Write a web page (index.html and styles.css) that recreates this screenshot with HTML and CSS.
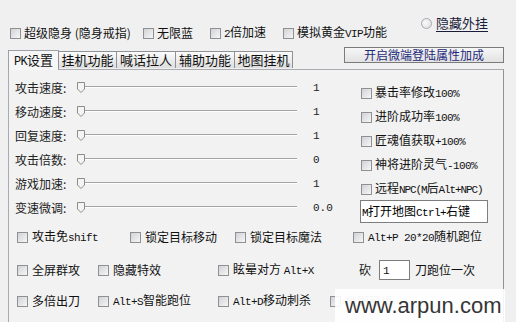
FILE: index.html
```html
<!DOCTYPE html>
<html lang="zh-CN">
<head>
  <meta charset="UTF-8">
  <title>PK设置</title>
  <link rel="stylesheet" href="styles.css">
</head>
<body>

<div class="top">
  <div class="opts">
    <label class="cb w1"><span class="box"></span><span>超级隐身 (隐身戒指)</span></label>
    <label class="cb w2"><span class="box"></span><span>无限蓝</span></label>
    <label class="cb w3"><span class="box"></span><span><span class="en">2</span>倍加速</span></label>
    <label class="cb"><span class="box"></span><span>模拟黄金<span class="en">VIP</span>功能</span></label>
  </div>
  <label class="radio"><span class="dot"></span><u>隐藏外挂</u></label>
</div>

<div class="tabbar">
  <div class="tab active" style="width:51px"><span><span class="en">PK</span>设置</span></div>
  <div class="tab" style="width:59px">挂机功能</div>
  <div class="tab" style="width:60px">喊话拉人</div>
  <div class="tab" style="width:60px">辅助功能</div>
  <div class="tab" style="width:59px">地图挂机</div>
  <button class="btn">开启微端登陆属性加成</button>
</div>

<div class="panel">
  <div class="upper">
    <div class="sliders">
      <div class="srow"><span class="slabel">攻击速度:</span><div class="slider"><div class="track"></div><svg class="thumb" width="8" height="11" viewBox="0 0 8 11"><path d="M0.5 0.5 H7.5 V7 L4 10.5 L0.5 7 Z" fill="#f4f4f4" stroke="#8c8c8c"/></svg></div><span class="val">1</span></div>
      <div class="srow"><span class="slabel">移动速度:</span><div class="slider"><div class="track"></div><svg class="thumb" width="8" height="11" viewBox="0 0 8 11"><path d="M0.5 0.5 H7.5 V7 L4 10.5 L0.5 7 Z" fill="#f4f4f4" stroke="#8c8c8c"/></svg></div><span class="val">1</span></div>
      <div class="srow"><span class="slabel">回复速度:</span><div class="slider"><div class="track"></div><svg class="thumb" width="8" height="11" viewBox="0 0 8 11"><path d="M0.5 0.5 H7.5 V7 L4 10.5 L0.5 7 Z" fill="#f4f4f4" stroke="#8c8c8c"/></svg></div><span class="val">1</span></div>
      <div class="srow"><span class="slabel">攻击倍数:</span><div class="slider"><div class="track"></div><svg class="thumb" width="8" height="11" viewBox="0 0 8 11"><path d="M0.5 0.5 H7.5 V7 L4 10.5 L0.5 7 Z" fill="#f4f4f4" stroke="#8c8c8c"/></svg></div><span class="val">0</span></div>
      <div class="srow"><span class="slabel">游戏加速:</span><div class="slider"><div class="track"></div><svg class="thumb" width="8" height="11" viewBox="0 0 8 11"><path d="M0.5 0.5 H7.5 V7 L4 10.5 L0.5 7 Z" fill="#f4f4f4" stroke="#8c8c8c"/></svg></div><span class="val">1</span></div>
      <div class="srow"><span class="slabel">变速微调:</span><div class="slider"><div class="track"></div><svg class="thumb" width="8" height="11" viewBox="0 0 8 11"><path d="M0.5 0.5 H7.5 V7 L4 10.5 L0.5 7 Z" fill="#f4f4f4" stroke="#8c8c8c"/></svg></div><span class="val">0.0</span></div>
    </div>
    <div class="rightcol">
      <label class="cb crow"><span class="box"></span><span>暴击率修改<span class="en">100%</span></span></label>
      <label class="cb crow"><span class="box"></span><span>进阶成功率<span class="en">100%</span></span></label>
      <label class="cb crow"><span class="box"></span><span>匠魂值获取<span class="en">+100%</span></span></label>
      <label class="cb crow"><span class="box"></span><span>神将进阶灵气<span class="en">-100%</span></span></label>
      <label class="cb crow"><span class="box"></span><span>远程<span class="en tight">NPC(M</span>后<span class="en tight">Alt+NPC)</span></span></label>
      <div class="textbox"><span><span class="en">M</span>打开地图<span class="en">Ctrl+</span>右键</span></div>
    </div>
  </div>

  <div class="row r1">
    <label class="cb" style="width:113px"><span class="box"></span><span>攻击免<span class="en">shift</span></span></label>
    <label class="cb" style="width:105px"><span class="box"></span><span>锁定目标移动</span></label>
    <label class="cb" style="width:118px"><span class="box"></span><span>锁定目标魔法</span></label>
    <label class="cb"><span class="box"></span><span><span class="en">Alt+P 20*20</span>随机跑位</span></label>
  </div>
  <div class="row r2">
    <label class="cb" style="width:81px"><span class="box"></span><span>全屏群攻</span></label>
    <label class="cb" style="width:120px"><span class="box"></span><span>隐藏特效</span></label>
    <label class="cb" style="width:141px"><span class="box"></span><span>眩晕对方 <span class="en">Alt+X</span></span></label>
    <span class="kan">砍</span><span class="numbox">1</span><span>刀跑位一次</span>
  </div>
  <div class="row r3">
    <label class="cb" style="width:81px"><span class="box"></span><span>多倍出刀</span></label>
    <label class="cb" style="width:120px"><span class="box"></span><span><span class="en">Alt+S</span>智能跑位</span></label>
    <label class="cb" style="width:112px"><span class="box"></span><span><span class="en">Alt+D</span>移动刺杀</span></label>
    <label class="cb"><span class="box"></span><span class="hidden">地图穿墙</span></label>
  </div>
</div>

<div class="watermark">www.arpun.com</div>

</body>
</html>
```

FILE: styles.css
```css
* {
  box-sizing: border-box;
}
body {
  margin: 0;
  width: 516px;
  height: 322px;
  overflow: hidden;
  background-color: #f0f0f0;
  color: #111;
  font-family: "Noto Sans CJK SC", sans-serif;
  font-size: 12px;
  line-height: 12px;
  position: relative;
}
.en {
  font-family: "Liberation Mono", monospace;
  font-size: 11px;
  letter-spacing: -0.6px;
}
.tight {
  letter-spacing: -1.1px;
}
.top {
  height: 44px;
  display: flex;
  justify-content: space-between;
}
.opts {
  display: flex;
  padding: 27px 0 0 10px;
}
.cb {
  display: flex;
  align-items: center;
  gap: 3px;
  height: 12px;
  white-space: nowrap;
}
.w1 { width: 133px; }
.w2 { width: 67px; }
.w3 { width: 73px; }
.box {
  width: 11px;
  height: 11px;
  flex: none;
  border: 1px solid #8e9094;
  background: linear-gradient(135deg, #d2d3d6, #f6f6f6);
}
.radio {
  display: flex;
  align-items: center;
  gap: 4px;
  margin: 17px 28px 0 0;
  height: 12px;
  font-size: 13px;
  color: #1b1b3a;
}
.dot {
  width: 11px;
  height: 11px;
  border-radius: 50%;
  border: 1px solid #a8aab0;
  background: radial-gradient(circle at 40% 40%, #fbfbfb, #d8d9dc);
}
.radio u {
  text-underline-offset: 3px;
}
.tabbar {
  height: 25px;
  display: flex;
  align-items: flex-end;
  padding-left: 8px;
  position: relative;
  z-index: 1;
}
.tab {
  height: 17px;
  border: 1px solid #8e9196;
  border-bottom: none;
  background: linear-gradient(#fbfbfb, #dedede);
  font-size: 13px;
  display: flex;
  align-items: center;
  justify-content: center;
  margin-bottom: 1px;
  margin-right: -1px;
}
.tab.active {
  height: 20px;
  margin-bottom: -1px;
  background: #f6f6f6;
  border-color: #9da0a6;
}
.tab .en {
  font-size: 12px;
}
.btn {
  align-self: flex-start;
  margin: 3px 12px 0 auto;
  width: 160px;
  height: 16px;
  padding: 0;
  border: 1px solid #7b7b7b;
  background: linear-gradient(#f6f6f6, #e2e2e2);
  color: #1f2a7a;
  font-family: "Noto Sans CJK SC", sans-serif;
  font-size: 12px;
  line-height: 12px;
}
.panel {
  margin: 0 12px 0 8px;
  height: 260px;
  border: 1px solid #a9abb0;
  border-right-color: #8f9297;
  background-color: #f2f2f2;
}
.upper {
  display: flex;
}
.sliders {
  width: 352px;
  padding: 6px 0 0 6px;
}
.srow {
  height: 24px;
  display: flex;
  align-items: center;
}
.slabel {
  width: 62px;
  color: #222;
}
.slider {
  width: 220px;
  height: 12px;
  position: relative;
}
.track {
  position: absolute;
  left: 2px;
  right: 0;
  top: 4px;
  height: 2px;
  border-top: 1px solid #a3a3a3;
  border-bottom: 1px solid #ffffff;
}
.thumb {
  position: absolute;
  left: 0;
  top: 0;
}
.val {
  margin-left: 16px;
  font-family: "Liberation Mono", monospace;
  font-size: 11px;
  color: #222;
}
.rightcol {
  padding-top: 11px;
}
.crow {
  height: 24px;
  gap: 3px;
}
.textbox {
  margin: -1px 0 0 -1px;
  width: 128px;
  height: 23px;
  border: 1px solid #7d7d7d;
  background: #fff;
  display: flex;
  align-items: center;
  padding-left: 1px;
  color: #000;
}
.row {
  display: flex;
  align-items: center;
  height: 20px;
  padding-left: 8px;
}
.r1 { margin-top: 4px; }
.r2 { margin-top: 13px; }
.r3 { margin-top: 11px; }
.r2 .cb, .r3 .cb, .r1 .cb {
  gap: 4px;
}
.hidden {
  color: #999;
}
.kan {
  margin-right: 8px;
}
.numbox {
  width: 31px;
  height: 20px;
  border: 1px solid #7d7d7d;
  background: #fff;
  padding: 4px 0 0 3px;
  margin-right: 5px;
  font-family: "Liberation Mono", monospace;
  font-size: 11px;
}
.watermark {
  position: absolute;
  left: 335px;
  top: 289px;
  width: 170px;
  height: 33px;
  background: rgba(255, 255, 255, 0.9);
  color: #363636;
  font-family: "Liberation Sans", sans-serif;
  font-size: 22px;
  line-height: 33px;
  padding-left: 10px;
}
```
